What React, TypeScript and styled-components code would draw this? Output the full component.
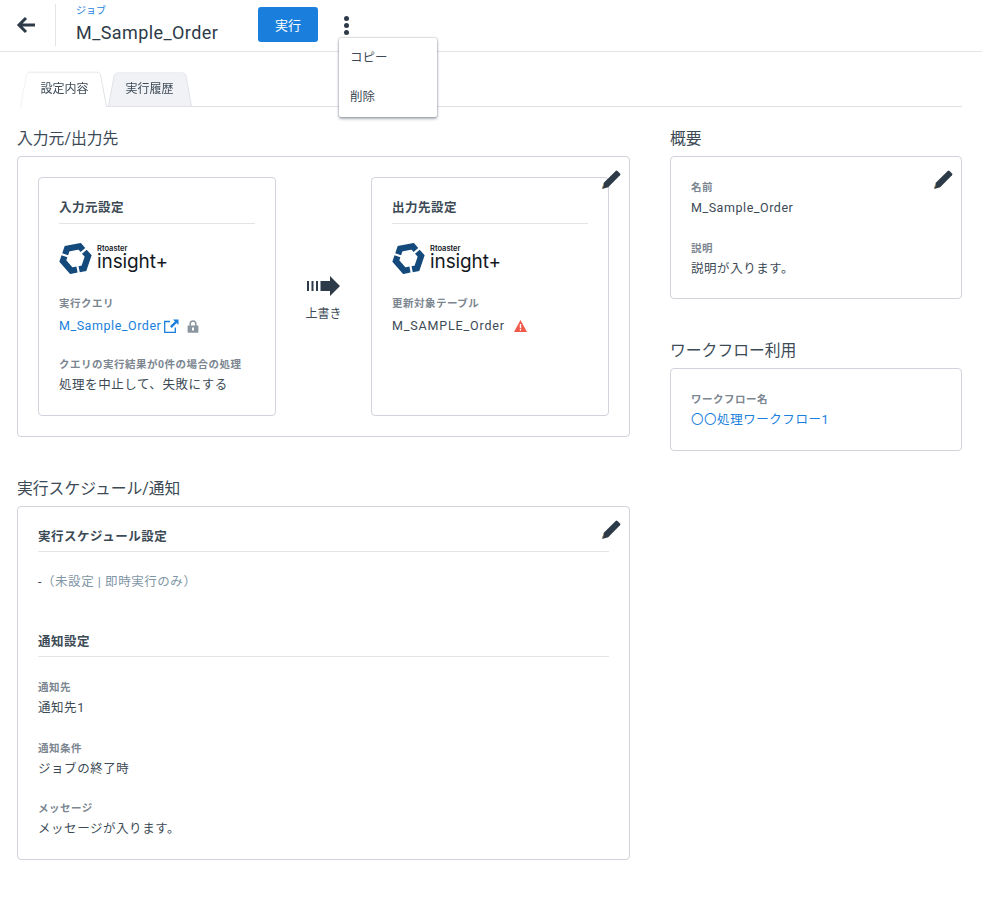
import React from "react";
import styled, { createGlobalStyle } from "styled-components";

const Global = createGlobalStyle`
  html, body { margin: 0; padding: 0; background: #fff; }
  body { font-family: Roboto, "Noto Sans CJK JP", sans-serif; color: #2d3b48; font-size: 13px; }
  * { box-sizing: border-box; }
`;

const Page = styled.div`
  width: 982px;
  height: 901px;
  position: relative;
  overflow: hidden;
`;
const Header = styled.header`
  height: 52px;
  border-bottom: 1px solid #e2e4e8;
  display: flex;
  align-items: flex-start;
  position: relative;
`;
const BackButton = styled.div`
  width: 56px;
  height: 42px;
  margin-top: 4px;
  border-right: 1px solid #e2e4e8;
  display: flex;
  align-items: center;
  justify-content: center;
  padding-right: 3px;
`;
const TitleBlock = styled.div`
  margin-left: 20px;
  width: 182px;
  padding-top: 4px;
`;
const TitleLabel = styled.div`
  font-size: 10px;
  line-height: 13px;
  color: #1a7fdc;
`;
const Title = styled.h1`
  margin: 4px 0 0;
  font-size: 18px;
  line-height: 24px;
  font-weight: 400;
  letter-spacing: 0.42px;
  color: #2d3b48;
`;
const RunButton = styled.button`
  margin-top: 7px;
  width: 60px;
  height: 35px;
  background: #1a7fdc;
  color: #fff;
  border: none;
  border-radius: 3px;
  font: 400 13px Roboto, "Noto Sans CJK JP", sans-serif;
`;
const MoreButton = styled.div`
  margin: 16px 0 0 26px;
  width: 6px;
  display: flex;
  flex-direction: column;
  gap: 2px;
`;
const Dot = styled.span`
  width: 5px;
  height: 5px;
  border-radius: 50%;
  background: #2d3b48;
`;
const Menu = styled.div`
  position: absolute;
  left: 339px;
  top: 38px;
  width: 98px;
  height: 79px;
  background: #fff;
  border-radius: 2px;
  box-shadow: 0 0 2px rgba(30, 40, 60, 0.5), 0 2px 3px rgba(30, 40, 60, 0.35);
  padding-top: 1px;
  z-index: 5;
`;
const MenuItem = styled.div`
  height: 39px;
  line-height: 37px;
  padding-left: 11px;
  font-size: 12.5px;
  color: #3c4a56;
`;
const Main = styled.main`
  padding: 21px 20px 0 17px;
`;
const Tabs = styled.div`
  margin-left: 3px;
  height: 34px;
  border-bottom: 1px solid #dfe1e6;
  display: flex;
`;
const Tab = styled.div<{ $active?: boolean }>`
  position: relative;
  z-index: ${(p) => (p.$active ? 2 : 1)};
  height: ${(p) => (p.$active ? "34px" : "33px")};
  width: ${(p) => (p.$active ? "87px" : "84px")};
  margin-left: ${(p) => (p.$active ? "0" : "1px")};
  padding: ${(p) => (p.$active ? "0 0 0 2px" : "0 1px 0 0")};
  font-size: 12px;
  letter-spacing: 0;
  line-height: 33px;
  text-align: center;
  color: #3c4a56;

  &::before {
    content: "";
    position: absolute;
    left: 0;
    right: 0;
    bottom: 0;
    height: ${(p) => (p.$active ? "40.600px" : "39.400px")};
    background: ${(p) => (p.$active ? "#fff" : "#f1f2f6")};
    border: 1px solid #dfe1e6;
    border-left-color: ${(p) => (p.$active ? "#eef0f2" : "#dfe1e6")};
    border-bottom: none;
    border-radius: 5px 5px 0 0;
    transform-origin: 50% 100%;
    transform: perspective(40px) rotateX(9.900deg);
    z-index: -1;
  }
`;
const Columns = styled.div`
  display: grid;
  grid-template-columns: 613px 292px;
  gap: 40px;
  margin-top: 21px;
`;
const Column = styled.div`
  display: flex;
  flex-direction: column;
`;
const SectionTitle = styled.h2<{ $gap?: number }>`
  margin: ${(p) => p.$gap ?? 0}px 0 7px;
  font-size: 15.800px;
  line-height: 21px;
  font-weight: 400;
  color: #3c4a56;
`;
const Card = styled.section<{ $h: number }>`
  position: relative;
  height: ${(p) => p.$h}px;
  border: 1px solid #d0d3da;
  border-radius: 4px;
`;
const PencilSlot = styled.div`
  position: absolute;
  top: 13px;
  right: 8px;
  width: 20px;
  height: 20px;
  z-index: 3;
`;
const SourceRow = styled.div`
  display: grid;
  grid-template-columns: 238px 95px 238px;
  padding: 20px 20px;
`;
const InnerCard = styled.div`
  height: 239px;
  border: 1px solid #d0d3da;
  border-radius: 4px;
  padding: 20px 20px 0;
`;
const Heading = styled.h3<{ $h?: number; $top?: number }>`
  margin: ${(p) => p.$top ?? 0}px 0 0;
  height: ${(p) => p.$h ?? 26}px;
  font-size: 12.500px;
  letter-spacing: 0.5px;
  line-height: 20px;
  font-weight: 700;
  color: #3c4a56;
  border-bottom: 1px solid #e2e4e8;
`;
const LogoRow = styled.div`
  margin-top: 19px;
  height: 31px;
  display: flex;
  align-items: flex-start;
  gap: 5px;
`;
const LogoText = styled.div`
  display: flex;
  flex-direction: column;
  padding-top: 2px;
  color: #15191d;
`;
const LogoSmall = styled.span`
  font: 600 7.500px/8px Inter, sans-serif;
`;
const LogoBig = styled.span`
  margin-top: -1px;
  font: 400 19px/20px Inter, sans-serif;
  letter-spacing: -0.1px;
`;
const FieldLabel = styled.div<{ $top?: number }>`
  margin-top: ${(p) => p.$top ?? 0}px;
  font-size: 10.500px;
  letter-spacing: 0.5px;
  line-height: 15px;
  font-weight: 700;
  color: #7b8690;
`;
const FieldValue = styled.div<{ $top?: number }>`
  margin-top: ${(p) => p.$top ?? 4}px;
  font-size: 12.500px;
  letter-spacing: 0.55px;
  line-height: 18px;
  color: #3c4a56;
  display: flex;
  align-items: center;
`;
const LinkText = styled.span`
  color: #1a7fdc;
`;
const TableName = styled.span`
  letter-spacing: 0.85px;
`;
const Muted = styled.span`
  color: #7f96a6;
`;
const OverwriteCell = styled.div`
  display: flex;
  flex-direction: column;
  align-items: center;
  padding-top: 99px;
`;
const OverwriteLabel = styled.div`
  margin-top: 10px;
  font-size: 12px;
  line-height: 16px;
  color: #3c4a56;
`;
const Pad = styled.div`
  padding: 20px 20px 0;
`;
const SideCardBody = styled.div`
  padding: 23px 20px 0;
`;
const IconGap = styled.span<{ $l: number }>`
  margin-left: ${(p) => p.$l}px;
  display: inline-flex;
`;

const Pencil = () => (
  <PencilSlot>
    <svg width="20" height="20" viewBox="0 0 20 20">
      <path fill="#2d3b48" d="M2.800 12.800 14.700 1a1.300 1.300 0 0 1 1.800 0l2.500 2.500a1.300 1.300 0 0 1 0 1.800L7.200 17.200 1 18.900z" />
      <path fill="#c9a26a" d="M2.400 13.600 3 14.200 1.700 18.200 1 18.900z" />
    </svg>
  </PencilSlot>
);

const BLADE = "M6.940 9.050 9.750 4.180H22.250L24.630 8.290";

const Logo = () => (
  <LogoRow>
    <svg width="33" height="31" viewBox="0 0 32 30">
      {[-11, 109, 229].map((a) => (
        <path key={a} fill="none" stroke="#14497c" strokeWidth="6" d={BLADE} transform={`rotate(${a} 16 15)`} />
      ))}
    </svg>
    <LogoText>
      <LogoSmall>Rtoaster</LogoSmall>
      <LogoBig>insight+</LogoBig>
    </LogoText>
  </LogoRow>
);

const Arrow = () => (
  <svg width="34" height="20" viewBox="0 0 34 20">
    <path fill="#2d3b48" d="M0 5h2v10H0zM4.500 5h2v10h-2zM9 5h2v10H9zM13.500 5H18v10h-4.500z" />
    <path fill="#2d3b48" d="M18 5h5V0l10 10-10 10v-5h-5z" />
  </svg>
);

const ExternalLink = () => (
  <svg width="15" height="14" viewBox="0 0 15 14">
    <path fill="none" stroke="#1a7fdc" strokeWidth="1.300" d="M6 2.500H.7v10.800h10.600V8.500" />
    <path fill="#1a7fdc" d="M9 .5h5.500V6l-1.900-1.900L7.800 9 6 7.200l4.900-4.800z" />
  </svg>
);

const Lock = () => (
  <svg width="12" height="13" viewBox="0 0 12 13">
    <path fill="none" stroke="#8a95a0" strokeWidth="1.500" d="M3.200 6V3.800a2.800 2.800 0 0 1 5.600 0V6" />
    <path fill="#8a95a0" d="M1.200 5.500h9.600a.6.600 0 0 1 .6.600v6a.6.600 0 0 1-.6.600H1.200a.6.600 0 0 1-.6-.6v-6a.6.600 0 0 1 .6-.6z" />
    <rect x="5" y="7.500" width="2" height="3" fill="#fff" />
  </svg>
);

const Warn = () => (
  <svg width="13" height="12" viewBox="0 0 13 12">
    <path fill="#f0584a" d="M6.500 0 13 12H0z" />
    <path fill="#fff" d="M5.800 4h1.400v4.200H5.800zM5.800 9h1.400v1.400H5.800z" />
  </svg>
);

const BackArrow = () => (
  <svg width="20" height="18" viewBox="0 0 20 18">
    <path fill="none" stroke="#2d3b48" strokeWidth="3" d="M19 9H3.500M10 2 3 9l7 7" />
  </svg>
);

export default function App() {
  return (
    <Page>
      <Global />
      <Header>
        <BackButton>
          <BackArrow />
        </BackButton>
        <TitleBlock>
          <TitleLabel>ジョブ</TitleLabel>
          <Title>M_Sample_Order</Title>
        </TitleBlock>
        <RunButton>実行</RunButton>
        <MoreButton>
          <Dot />
          <Dot />
          <Dot />
        </MoreButton>
        <Menu>
          <MenuItem>コピー</MenuItem>
          <MenuItem>削除</MenuItem>
        </Menu>
      </Header>
      <Main>
        <Tabs>
          <Tab $active>設定内容</Tab>
          <Tab>実行履歴</Tab>
        </Tabs>
        <Columns>
          <Column>
            <SectionTitle>入力元/出力先</SectionTitle>
            <Card $h={281}>
              <Pencil />
              <SourceRow>
                <InnerCard>
                  <Heading>入力元設定</Heading>
                  <Logo />
                  <FieldLabel $top={22}>実行クエリ</FieldLabel>
                  <FieldValue $top={6}>
                    <LinkText>M_Sample_Order</LinkText>
                    <IconGap $l={3}>
                      <ExternalLink />
                    </IconGap>
                    <IconGap $l={8}>
                      <Lock />
                    </IconGap>
                  </FieldValue>
                  <FieldLabel $top={22}>クエリの実行結果が0件の場合の処理</FieldLabel>
                  <FieldValue>処理を中止して、失敗にする</FieldValue>
                </InnerCard>
                <OverwriteCell>
                  <Arrow />
                  <OverwriteLabel>上書き</OverwriteLabel>
                </OverwriteCell>
                <InnerCard>
                  <Heading>出力先設定</Heading>
                  <Logo />
                  <FieldLabel $top={22}>更新対象テーブル</FieldLabel>
                  <FieldValue $top={6}>
                    <TableName>M_SAMPLE_Order</TableName>
                    <IconGap $l={9}>
                      <Warn />
                    </IconGap>
                  </FieldValue>
                </InnerCard>
              </SourceRow>
            </Card>
            <SectionTitle $gap={41}>実行スケジュール/通知</SectionTitle>
            <Card $h={354}>
              <Pencil />
              <Pad>
                <Heading $h={25}>実行スケジュール設定</Heading>
                <FieldValue $top={21}>
                  <span>-</span>
                  <Muted>（未設定 | 即時実行のみ）</Muted>
                </FieldValue>
                <Heading $h={25} $top={41}>通知設定</Heading>
                <FieldLabel $top={23}>通知先</FieldLabel>
                <FieldValue>通知先1</FieldValue>
                <FieldLabel $top={24}>通知条件</FieldLabel>
                <FieldValue>ジョブの終了時</FieldValue>
                <FieldLabel $top={23}>メッセージ</FieldLabel>
                <FieldValue>メッセージが入ります。</FieldValue>
              </Pad>
            </Card>
          </Column>
          <Column>
            <SectionTitle>概要</SectionTitle>
            <Card $h={143}>
              <Pencil />
              <SideCardBody>
                <FieldLabel>名前</FieldLabel>
                <FieldValue>M_Sample_Order</FieldValue>
                <FieldLabel $top={24}>説明</FieldLabel>
                <FieldValue>説明が入ります。</FieldValue>
              </SideCardBody>
            </Card>
            <SectionTitle $gap={41}>ワークフロー利用</SectionTitle>
            <Card $h={83}>
              <SideCardBody>
                <FieldLabel>ワークフロー名</FieldLabel>
                <FieldValue>
                  <LinkText>〇〇処理ワークフロー1</LinkText>
                </FieldValue>
              </SideCardBody>
            </Card>
          </Column>
        </Columns>
      </Main>
    </Page>
  );
}
